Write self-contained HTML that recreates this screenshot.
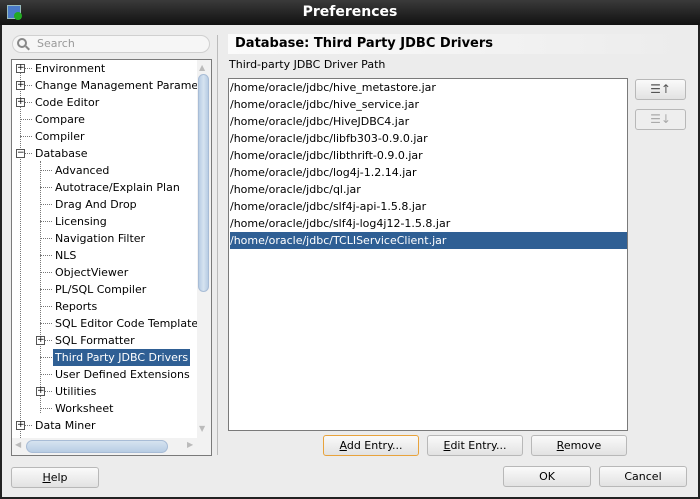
<!DOCTYPE html>
<html><head><meta charset="utf-8"><style>
*{margin:0;padding:0;box-sizing:border-box}
body{width:700px;height:499px;position:relative;overflow:hidden;background:#ececec;font-family:"DejaVu Sans","Liberation Sans",sans-serif;font-size:11px;color:#000}
.a{position:absolute;white-space:nowrap}
.title{left:0;top:0;width:700px;height:25px;background:linear-gradient(#3a3a3a,#111);color:#fff;font-weight:bold;font-size:14px;text-align:center;line-height:24px}
.row{position:absolute;height:17px;line-height:17px}
.pm{position:absolute;width:9px;height:9px;border:1px solid #555;background:#fff;font-size:9px;line-height:7px;text-align:center}
.btn{position:absolute;height:21px;border:1px solid #b8b8b8;border-radius:3px;background:linear-gradient(#fafafa,#e2e2e2);text-align:center;line-height:19px}
.li{position:absolute;left:1px;width:397px;height:17px;line-height:17px;padding-left:0}
</style></head><body>
<div class="a title">Preferences</div>
<div class="a" style="left:7px;top:5px;width:14px;height:14px;background:#4a7ac8;border:1px solid #9bb"></div>
<div class="a" style="left:14px;top:12px;width:8px;height:8px;border-radius:50%;background:#2a2"></div>
<div class="a" style="left:0;top:25px;width:2px;height:474px;background:#222"></div>
<div class="a" style="left:698px;top:25px;width:2px;height:474px;background:#222"></div>
<div class="a" style="left:0;top:497px;width:700px;height:2px;background:#222"></div>

<div class="a" style="left:12px;top:35px;width:198px;height:18px;border:1px solid #d0d0d0;border-radius:9px;background:#f6f6f6"></div>
<div class="a" style="left:17px;top:38px;width:10px;height:10px;border:2px solid #888;border-radius:50%"></div>
<div class="a" style="left:25px;top:47px;width:5px;height:2px;background:#888;transform:rotate(45deg)"></div>
<div class="a" style="left:37px;top:37px;color:#999;line-height:14px">Search</div>

<div class="a" style="left:11px;top:59px;width:201px;height:397px;border:1px solid #7a7a7a;background:#fff;overflow:hidden">
<div class="a" style="left:8px;top:10px;height:370px;border-left:1px dotted #777"></div>
<div class="a" style="left:28px;top:101px;height:252px;border-left:1px dotted #777"></div>
<div id="tree"></div>
<div class="a" style="left:185px;top:0;width:14px;height:378px;background:#f2f2f2"></div>
<div class="a" style="left:186px;top:14px;width:11px;height:218px;border-radius:6px;background:linear-gradient(90deg,#b8cde4,#d6e3f0,#b8cde4);border:1px solid #a8bcd6"></div>
<div class="a" style="left:187px;top:3px;color:#bbb;font-size:8px">▲</div>
<div class="a" style="left:187px;top:364px;color:#bbb;font-size:8px">▼</div>
<div class="a" style="left:0;top:378px;width:199px;height:18px;background:#f2f2f2"></div>
<div class="a" style="left:14px;top:380px;width:142px;height:13px;border-radius:7px;background:linear-gradient(#d6e3f0,#b8cde4);border:1px solid #a8bcd6"></div>
<div class="a" style="left:3px;top:380px;color:#bbb;font-size:8px">◀</div>
<div class="a" style="left:175px;top:380px;color:#bbb;font-size:8px">▶</div>
</div>
<div class="a" style="left:217px;top:35px;width:1px;height:420px;background:#bbb"></div>

<div class="a" style="left:228px;top:34px;width:457px;height:20px;background:linear-gradient(90deg,#fbfbfb,#ececec);font-weight:bold;font-size:13px;line-height:20px;padding-left:7px">Database: Third Party JDBC Drivers</div>
<div class="a" style="left:229px;top:58px;font-size:11px">Third-party JDBC Driver Path</div>
<div class="a" style="left:228px;top:78px;width:400px;height:353px;border:1px solid #7a7a7a;background:#fff">
<div class="li" style="top:0">/home/oracle/jdbc/hive_metastore.jar</div>
<div class="li" style="top:17px">/home/oracle/jdbc/hive_service.jar</div>
<div class="li" style="top:34px">/home/oracle/jdbc/HiveJDBC4.jar</div>
<div class="li" style="top:51px">/home/oracle/jdbc/libfb303-0.9.0.jar</div>
<div class="li" style="top:68px">/home/oracle/jdbc/libthrift-0.9.0.jar</div>
<div class="li" style="top:85px">/home/oracle/jdbc/log4j-1.2.14.jar</div>
<div class="li" style="top:102px">/home/oracle/jdbc/ql.jar</div>
<div class="li" style="top:119px">/home/oracle/jdbc/slf4j-api-1.5.8.jar</div>
<div class="li" style="top:136px">/home/oracle/jdbc/slf4j-log4j12-1.5.8.jar</div>
<div class="li" style="top:153px;background:#2f5f94;color:#fff">/home/oracle/jdbc/TCLIServiceClient.jar</div>
</div>
<div class="btn" style="left:635px;top:79px;width:51px;height:21px;color:#555;font-size:12px">☰↑</div>
<div class="btn" style="left:635px;top:109px;width:51px;height:21px;color:#aaa;background:#eee;font-size:12px">☰↓</div>

<div class="btn" style="left:323px;top:435px;width:96px;border-color:#e8a33c"><u>A</u>dd Entry...</div>
<div class="btn" style="left:427px;top:435px;width:96px"><u>E</u>dit Entry...</div>
<div class="btn" style="left:531px;top:435px;width:96px"><u>R</u>emove</div>
<div class="btn" style="left:11px;top:467px;width:88px"><u>H</u>elp</div>
<div class="btn" style="left:503px;top:466px;width:88px">OK</div>
<div class="btn" style="left:599px;top:466px;width:88px">Cancel</div>

<script>
var rows=[["Environment",0,"+"],["Change Management Parameters",0,"+"],["Code Editor",0,"+"],["Compare",0],["Compiler",0],["Database",0,"−"],["Advanced",1],["Autotrace/Explain Plan",1],["Drag And Drop",1],["Licensing",1],["Navigation Filter",1],["NLS",1],["ObjectViewer",1],["PL/SQL Compiler",1],["Reports",1],["SQL Editor Code Templates",1],["SQL Formatter",1,"+"],["Third Party JDBC Drivers",1,null,1],["User Defined Extensions",1],["Utilities",1,"+"],["Worksheet",1],["Data Miner",0,"+"],["Data Modeler",0,"+"]];
var h="";rows.forEach(function(r,i){var t=i*17,x=r[1]?41:21;
h+='<div class="a" style="left:'+(r[1]?28:8)+'px;top:'+(t+8)+'px;width:12px;border-top:1px dotted #777"></div>';
if(r[2])h+='<div class="pm" style="left:'+(r[1]?24:4)+'px;top:'+(t+4)+'px">'+r[2]+'</div>';
h+='<div class="row" style="left:'+x+'px;top:'+t+'px;padding:0 2px;'+(r[3]?'background:#2f5f94;color:#fff':'')+'">'+r[0]+'</div>';});
document.getElementById("tree").innerHTML=h;
</script>
</body></html>
